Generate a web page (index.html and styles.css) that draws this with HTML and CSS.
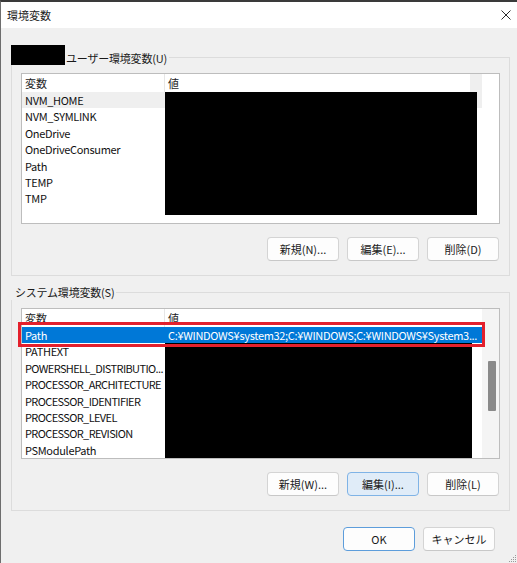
FILE: index.html
```html
<!DOCTYPE html>
<html lang="ja">
<head>
<meta charset="utf-8">
<title>環境変数</title>
<link rel="stylesheet" href="styles.css">
</head>
<body>
<div class="window">
  <div class="titlebar">
    <span class="title">環境変数</span>
    <span class="close"><svg width="10" height="10" viewBox="0 0 10 10"><path d="M0.5 0.5 L9.5 9.5 M9.5 0.5 L0.5 9.5" stroke="#2b2b2b" stroke-width="1" fill="none"/></svg></span>
  </div>
  <div class="content">
    <section class="group group-user">
      <div class="group-title"><span class="redact-name"></span><span class="group-label">ユーザー環境変数(U)</span></div>
      <div class="list">
        <div class="list-view">
          <div class="list-header"><div class="col-name">変数</div><div class="col-value">値</div><div class="col-fill"></div></div>
          <div class="row row-inactive"><div class="col-name">NVM_HOME</div><div class="col-value"></div></div>
          <div class="row"><div class="col-name">NVM_SYMLINK</div><div class="col-value"></div></div>
          <div class="row"><div class="col-name">OneDrive</div><div class="col-value"></div></div>
          <div class="row"><div class="col-name">OneDriveConsumer</div><div class="col-value"></div></div>
          <div class="row"><div class="col-name">Path</div><div class="col-value"></div></div>
          <div class="row"><div class="col-name">TEMP</div><div class="col-value"></div></div>
          <div class="row"><div class="col-name">TMP</div><div class="col-value"></div></div>
        </div>
        <div class="scroll-area"></div>
        <div class="redact redact-user"></div>
      </div>
      <div class="buttons">
        <button class="btn">新規(N)...</button>
        <button class="btn">編集(E)...</button>
        <button class="btn">削除(D)</button>
      </div>
    </section>

    <section class="group group-system">
      <div class="group-title"><span class="group-label">システム環境変数(S)</span></div>
      <div class="list">
        <div class="list-view">
          <div class="list-header"><div class="col-name">変数</div><div class="col-value">値</div></div>
          <div class="row row-selected"><div class="col-name">Path</div><div class="col-value">C:¥WINDOWS¥system32;C:¥WINDOWS;C:¥WINDOWS¥System3...</div></div>
          <div class="row"><div class="col-name">PATHEXT</div><div class="col-value"></div></div>
          <div class="row row-caps"><div class="col-name">POWERSHELL_DISTRIBUTIO...</div><div class="col-value"></div></div>
          <div class="row row-caps"><div class="col-name">PROCESSOR_ARCHITECTURE</div><div class="col-value"></div></div>
          <div class="row row-caps"><div class="col-name">PROCESSOR_IDENTIFIER</div><div class="col-value"></div></div>
          <div class="row row-caps"><div class="col-name">PROCESSOR_LEVEL</div><div class="col-value"></div></div>
          <div class="row row-caps"><div class="col-name">PROCESSOR_REVISION</div><div class="col-value"></div></div>
          <div class="row"><div class="col-name">PSModulePath</div><div class="col-value"></div></div>
        </div>
        <div class="scroll-area scroll-track"><div class="scroll-thumb"></div></div>
        <div class="redact redact-system"></div>
        <div class="mark"></div>
      </div>
      <div class="buttons">
        <button class="btn">新規(W)...</button>
        <button class="btn btn-focus">編集(I)...</button>
        <button class="btn">削除(L)</button>
      </div>
    </section>

    <div class="footer">
      <button class="btn btn-default">OK</button>
      <button class="btn">キャンセル</button>
    </div>
  </div>
  <svg class="grip" width="7" height="7" viewBox="0 0 7 7">
    <rect x="6" y="0" width="1" height="1" fill="#9a9a9a"/>
    <rect x="4" y="2" width="1" height="1" fill="#9a9a9a"/>
    <rect x="6" y="2" width="1" height="1" fill="#9a9a9a"/>
    <rect x="2" y="4" width="1" height="1" fill="#9a9a9a"/>
    <rect x="4" y="4" width="1" height="1" fill="#9a9a9a"/>
    <rect x="6" y="4" width="1" height="1" fill="#9a9a9a"/>
    <rect x="0" y="6" width="1" height="1" fill="#9a9a9a"/>
    <rect x="2" y="6" width="1" height="1" fill="#9a9a9a"/>
    <rect x="4" y="6" width="1" height="1" fill="#9a9a9a"/>
    <rect x="6" y="6" width="1" height="1" fill="#9a9a9a"/>
  </svg>
</div>
</body>
</html>
```

FILE: styles.css
```css
* { box-sizing: border-box; }
html, body { margin: 0; padding: 0; }
body {
  width: 517px;
  height: 563px;
  overflow: hidden;
  background: #f0f0f0;
  font-family: "Noto Sans CJK JP", "Noto Sans", sans-serif;
  font-size: 11px;
  color: #1a1a1a;
}
.window {
  position: relative;
  width: 517px;
  height: 563px;
  border-top: 2px solid #3a3a3a;
  border-left: 1px solid #6e6e6e;
  background: #f0f0f0;
  display: flex;
  flex-direction: column;
}
.titlebar {
  height: 26px;
  flex: none;
  background: #fff;
  display: flex;
  align-items: center;
  justify-content: space-between;
  padding: 0 6px 0 6px;
}
.title { line-height: 16px; color: #1a1a1a; }
.close { display: flex; width: 10px; height: 10px; }
.content {
  flex: 1;
  display: flex;
  flex-direction: column;
  padding: 29px 7px 0 10px;
}
.group {
  border: 1px solid #dcdcdc;
  display: flex;
  flex-direction: column;
  padding-bottom: 14px;
}
.group + .group { margin-top: 16px; }
.group-title {
  display: flex;
  align-items: flex-start;
  align-self: flex-start;
  margin-left: -1px;
}
.group-user .group-title { margin-top: -13px; }
.group-system .group-title { margin-top: -9px; }
.redact-name { width: 54px; height: 20px; background: #000; }
.group-label {
  background: #f0f0f0;
  line-height: 16px;
  padding-right: 2px;
  letter-spacing: -0.2px;
}
.group-user .group-label { margin-top: 5px; padding-left: 1px; }
.group-system .group-label { padding-left: 4px; }

.list {
  position: relative;
  margin: 7px 9px 0;
  height: 151px;
  border: 1px solid #bdbdbd;
  background: #fff;
  display: flex;
}
.group-system .list { margin-top: 8px; }
.list-view { width: 460px; overflow: hidden; flex: none; }
.scroll-area { flex: 1; }
.scroll-track { background: #f4f4f4; padding: 52px 0 0 6px; }
.scroll-thumb { width: 8px; height: 50px; background: #8a8a8a; border-radius: 1px; }

.list-header { display: flex; height: 18px; line-height: 18px; color: #1e1e1e; }
.list-header .col-name { border-right: 1px solid #e6e6e6; }
.list-header .col-value { width: 305px; flex: none; }
.col-fill { flex: 1; background: #efefef; }
.row {
  display: flex;
  height: 16.4px;
  line-height: 16.4px;
  color: #111;
  letter-spacing: -0.32px;
}
.row-caps { letter-spacing: -0.62px; }
.col-name {
  width: 143px;
  flex: none;
  padding-left: 3px;
  white-space: nowrap;
  overflow: hidden;
}
.col-value {
  flex: 1;
  padding-left: 3px;
  white-space: nowrap;
  overflow: hidden;
}
.row-inactive { background: #efefef; }
.row-selected { background: #0078d7; color: #fff; }

.redact { position: absolute; background: #000; }
.redact-user { left: 143px; top: 18px; width: 312px; height: 123px; }
.redact-system { left: 143px; top: 34px; width: 307px; bottom: 0; }
.mark {
  position: absolute;
  left: -4px;
  top: 13px;
  width: 467px;
  height: 25px;
  border: 3px solid #e3202c;
}

.buttons {
  display: flex;
  justify-content: flex-end;
  gap: 8px;
  margin: 13px 10px 0 0;
}
.btn {
  width: 72px;
  height: 24px;
  padding: 0;
  border: 1px solid #d4d4d4;
  border-bottom-color: #c8c8c8;
  border-radius: 4px;
  background: #fdfdfd;
  font-family: inherit;
  font-size: 11px;
  color: #1a1a1a;
  display: flex;
  align-items: center;
  justify-content: center;
  line-height: 16px;
}
.btn-focus { background: #e0ecf8; border-color: #7fb3e6; }
.btn-default { border-color: #5d9ddb; background: #fdfdfd; }
.footer {
  display: flex;
  justify-content: flex-end;
  gap: 8px;
  margin-top: 16px;
  padding-right: 15px;
}
.grip { position: absolute; right: 1px; bottom: 1px; }
```
